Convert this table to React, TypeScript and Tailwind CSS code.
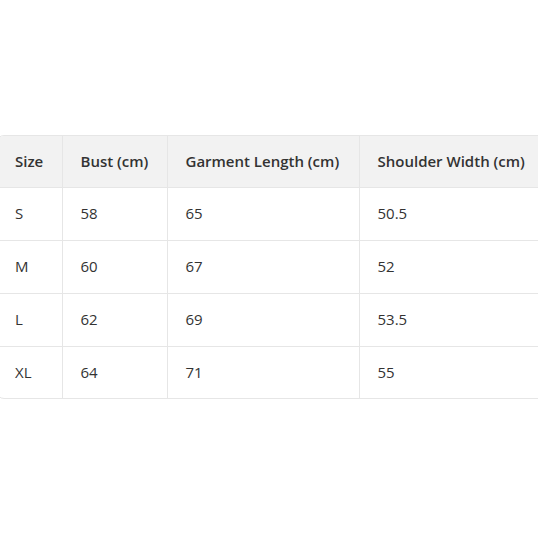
const rows = [
  ["S", "58", "65", "50.5"],
  ["M", "60", "67", "52"],
  ["L", "62", "69", "53.5"],
  ["XL", "64", "71", "55"],
]

const headers = ["Size", "Bust (cm)", "Garment Length (cm)", "Shoulder Width (cm)"]
const widths = ["w-[65px]", "w-[105px]", "w-[192px]", "w-[188px]"]

export default function App() {
  return (
    <div className="h-screen w-full overflow-hidden bg-white flex items-center font-['Open_Sans',sans-serif] text-[#333]">
      <div className="ml-[-4px] mb-[4px] w-[550px] shrink-0 rounded-lg border border-[#e6e6e6] overflow-hidden">
        <table className="w-full table-fixed border-collapse text-[15px]">
          <thead>
            <tr className="bg-[#f2f2f2] h-[51px]">
              {headers.map((h, i) => (
                <th
                  key={h}
                  className={`${widths[i]} px-[18px] text-left font-semibold ${i > 0 ? "border-l border-[#e6e6e6]" : ""}`}
                >
                  {h}
                </th>
              ))}
            </tr>
          </thead>
          <tbody>
            {rows.map((r, ri) => (
              <tr
                key={r[0]}
                className={`${ri === rows.length - 1 ? "h-[52px]" : "h-[53px]"} border-t border-[#e6e6e6]`}
              >
                {r.map((c, i) => (
                  <td
                    key={i}
                    className={`px-[18px] ${i > 0 ? "border-l border-[#e6e6e6]" : ""}`}
                  >
                    {c}
                  </td>
                ))}
              </tr>
            ))}
          </tbody>
        </table>
      </div>
    </div>
  )
}
